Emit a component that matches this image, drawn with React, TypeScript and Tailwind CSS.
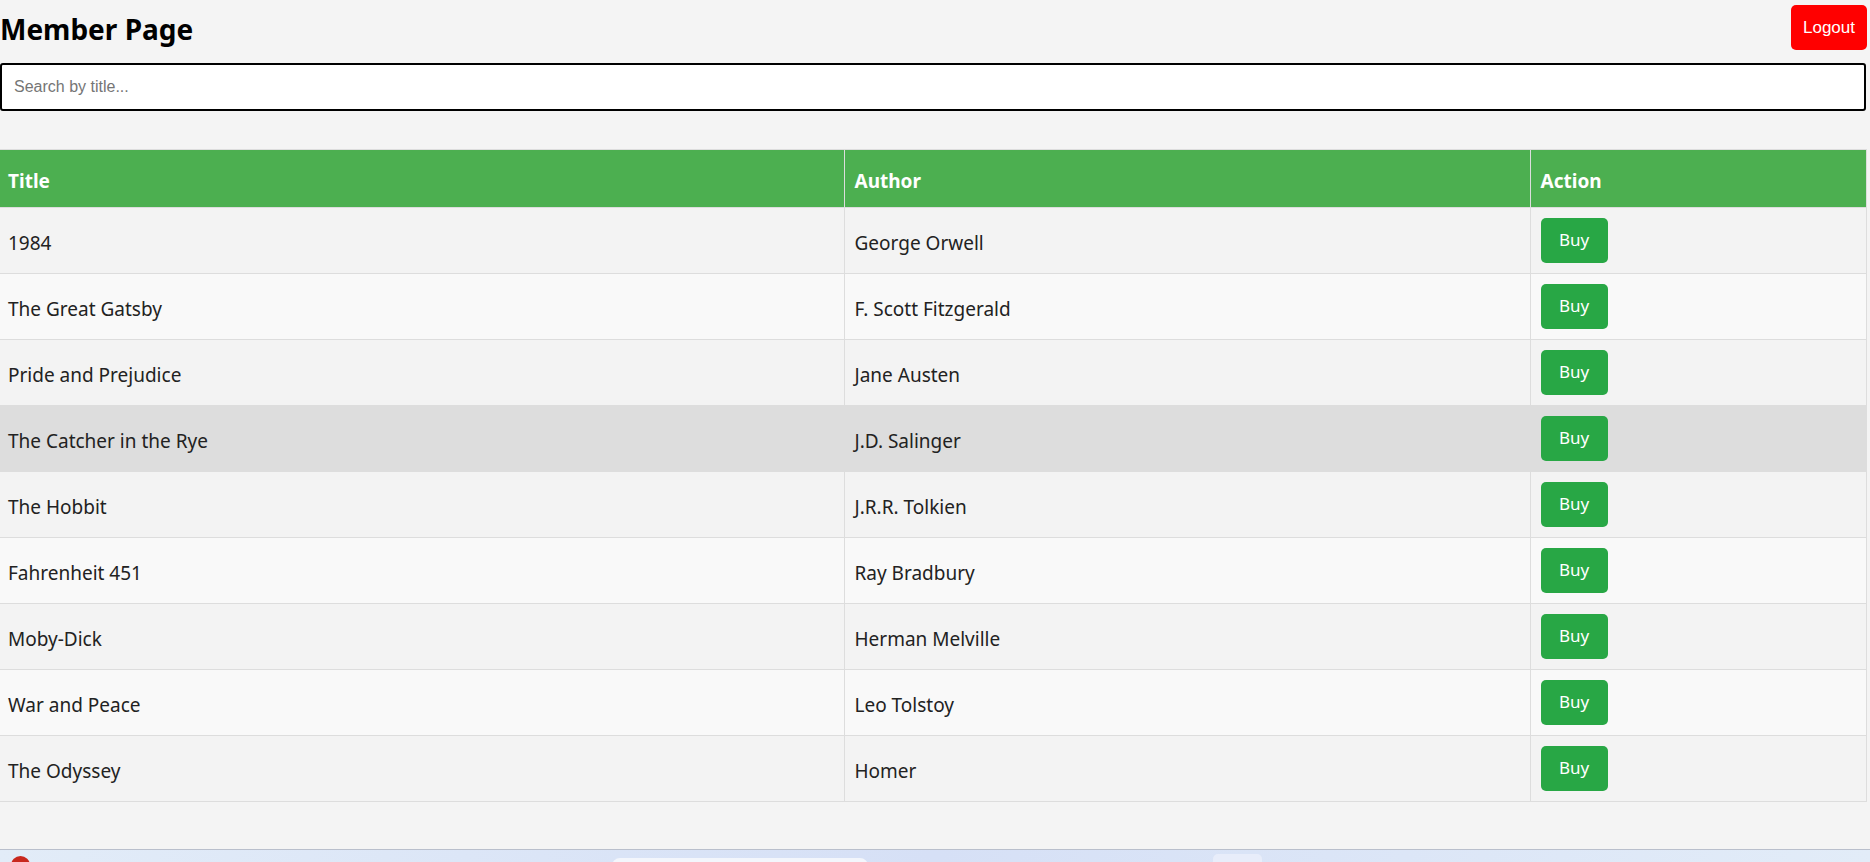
import React from "react";

const books = [
  { title: "1984", author: "George Orwell" },
  { title: "The Great Gatsby", author: "F. Scott Fitzgerald" },
  { title: "Pride and Prejudice", author: "Jane Austen" },
  { title: "The Catcher in the Rye", author: "J.D. Salinger" },
  { title: "The Hobbit", author: "J.R.R. Tolkien" },
  { title: "Fahrenheit 451", author: "Ray Bradbury" },
  { title: "Moby-Dick", author: "Herman Melville" },
  { title: "War and Peace", author: "Leo Tolstoy" },
  { title: "The Odyssey", author: "Homer" },
];

export default function App() {
  return (
    <div className="h-[862px] w-[1870px] flex flex-col bg-[#f4f4f4] overflow-hidden font-['Noto_Sans',sans-serif]">
      <main className="flex-1 w-[1867px]">
        <div className="flex justify-between items-start h-[63px]">
          <h1 className="pt-[10px] text-[28px] leading-[38px] font-bold text-black">
            Member Page
          </h1>
          <button className="mt-[5px] w-[76px] h-[45px] rounded-[5px] bg-[#ff0000] text-white text-[17px] font-['Liberation_Sans',sans-serif]">
            Logout
          </button>
        </div>

        <input
          type="text"
          placeholder="Search by title..."
          className="block w-[1866px] h-[48px] px-[12px] bg-white border-2 border-black rounded-[3px] text-[16px] font-['Liberation_Sans',sans-serif] placeholder:text-[#757575] outline-none"
        />

        <table className="mt-[38px] w-full border-collapse text-[19px]">
          <thead>
            <tr className="bg-[#4caf50] text-white">
              <th className="w-[844px] h-[58px] pl-[8px] pt-[5px] text-left font-bold border border-[#dddddd] border-l-0">
                Title
              </th>
              <th className="w-[686px] pl-[10px] pt-[5px] text-left font-bold border border-[#dddddd]">
                Author
              </th>
              <th className="pl-[10px] pt-[5px] text-left font-bold border border-[#dddddd]">
                Action
              </th>
            </tr>
          </thead>
          <tbody className="text-[#222222]">
            {books.map((b, i) => (
              <tr
                key={b.title}
                className={
                  i === 3
                    ? "bg-[#dddddd]"
                    : i % 2 === 1
                    ? "bg-[#f9f9f9]"
                    : "bg-[#f3f3f3]"
                }
              >
                <td className="pl-[8px] pt-[12px] pb-[7px] border border-[#dddddd] border-l-0">
                  {b.title}
                </td>
                <td className="pl-[10px] pt-[12px] pb-[7px] border border-[#dddddd]">
                  {b.author}
                </td>
                <td className="pl-[10px] py-[10px] border border-[#dddddd]">
                  <button className="block w-[67px] h-[45px] pb-[2px] rounded-[5px] bg-[#28a745] text-white text-[17px]">
                    Buy
                  </button>
                </td>
              </tr>
            ))}
          </tbody>
        </table>
      </main>

      {/* bit of the OS taskbar at the bottom edge */}
      <div className="h-[13px] shrink-0 flex items-start overflow-hidden border-t border-[#b9bfcc] bg-gradient-to-r from-[#e2ecf8] via-[#d6e0f6] to-[#e2ecf8]">
        <div className="ml-[11px] mt-[6px] w-[19px] h-[19px] rounded-full bg-[#c8281e] shrink-0" />
        <div className="ml-[582px] mt-[8px] w-[256px] h-[20px] rounded-[8px] bg-[#f3f6fc] shrink-0" />
        <div className="ml-[345px] mt-[4px] w-[49px] h-[20px] rounded-[5px] bg-[#e8edfa] shrink-0" />
      </div>
    </div>
  );
}
